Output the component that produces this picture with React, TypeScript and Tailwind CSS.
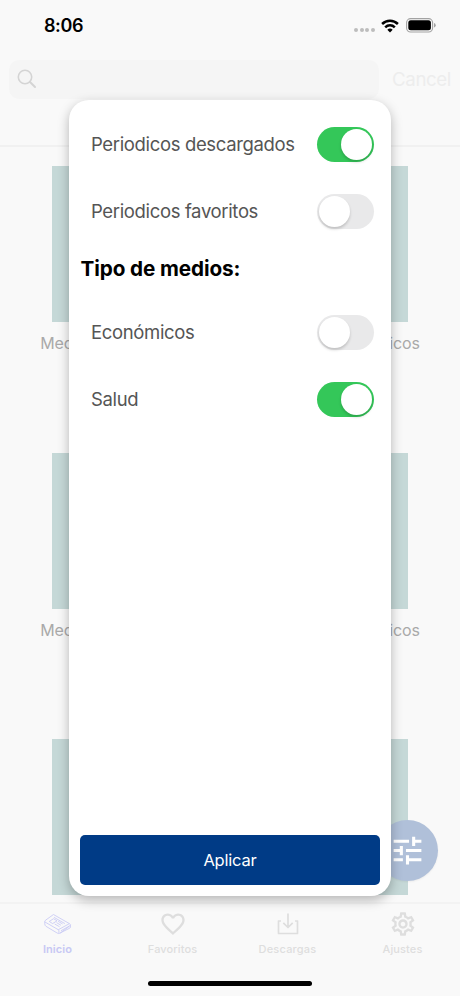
import { MdFavoriteBorder, MdOutlineSettings, MdTune } from "react-icons/md"

const filters = [
  { label: "Periodicos descargados", on: true },
  { label: "Periodicos favoritos", on: false },
]

const mediaTypes = [
  { label: "Económicos", on: false },
  { label: "Salud", on: true },
]

const rows = [0, 1, 2]

function NewspaperIcon() {
  return (
    <svg width="28" height="23" viewBox="0 0 30 24" fill="none" stroke="currentColor" strokeWidth="0.9" strokeLinejoin="round" strokeLinecap="round">
      <path d="M10.5 1.5 L27.5 11.2 Q29.3 12.3 27.7 13.5 L17.6 21 Q16 22.2 14.2 21.2 L2.2 14 Q.8 13 .8 11.2 V8.8 Q.8 8 1.8 7.3 Z" />
      <path d="M1 9.3 L15 17.4 Q16.6 18.3 16 20.5 M15.5 17.5 L26.8 11.3 M17.5 21 L27.8 15.8 Q29 15 28.3 13 M18.5 18.5 L26.5 14" />
      <path d="M11 4.5 L22 10.8 M6 8.5 L10.2 5.8 L14 8 L9.6 10.8 Z M15.5 8.8 L19.5 11.2 M13.8 10.2 L17.8 12.6 M11.8 11.7 L16.3 14.2" />
    </svg>
  )
}

function DownloadIcon() {
  return (
    <svg width="24" height="24" viewBox="0 0 24 24" fill="none" stroke="currentColor" strokeWidth="1.7" strokeLinejoin="round">
      <path d="M5 9 H2.5 V21.5 H21.5 V9 H19 M12 1.5 V15 M7.3 10.8 L12 15.5 L16.7 10.8" />
    </svg>
  )
}

function Switch({ on }: { on: boolean }) {
  return (
    <div className={`flex h-[35px] w-[57px] items-center rounded-full px-[2px] ${on ? "justify-end bg-[#34c759]" : "justify-start bg-[#e9e9ea]"}`}>
      <div className="size-[31px] rounded-full bg-white shadow-[0_2px_3px_rgba(0,0,0,0.18)]" />
    </div>
  )
}

function FilterRow({ label, on }: { label: string; on: boolean }) {
  return (
    <div className="flex h-[67px] items-center justify-between pr-[17.4px] pl-[22px]">
      <span className="pt-px text-[18.5px] tracking-[-0.35px] text-[#555555]">{label}</span>
      <Switch on={on} />
    </div>
  )
}

export default function App() {
  return (
    <div className="relative flex h-[996px] w-[460px] flex-col overflow-hidden bg-[#f9f9f9] font-['Inter','Liberation_Sans',sans-serif]">
      {/* Status bar */}
      <div className="flex h-[59px] shrink-0 items-center justify-between pr-[24px] pb-[8px] pl-[44px]">
        <span className="text-[18px] font-semibold tracking-[-0.4px] text-black">8:06</span>
        <div className="flex items-center">
          <div className="mt-[9px] flex gap-[1.6px] pr-[6px]">
            {[0, 1, 2, 3].map((dot) => (
              <div key={dot} className="size-[4px] rounded-full bg-[#bdbdbd]" />
            ))}
          </div>
          <svg width="18" height="14" viewBox="0 0 18 14" fill="none" stroke="black" strokeWidth="2.5">
            <path d="M1.1 5 A11.2 11.2 0 0 1 16.9 5" />
            <path d="M4.2 8.3 A6.8 6.8 0 0 1 13.8 8.3" />
            <path d="M9 13.5 L6.3 10.8 A3.9 3.9 0 0 1 11.7 10.8 Z" fill="black" stroke="none" />
          </svg>
          <svg className="ml-[7px]" width="30" height="15" viewBox="0 0 30 15">
            <rect x=".6" y=".6" width="26" height="13.4" rx="4" fill="none" stroke="#a3a3a3" strokeWidth="1.1" />
            <rect x="2.3" y="2.3" width="22.6" height="10" rx="2.5" fill="black" />
            <path d="M28 5 Q29.7 5.6 29.7 7.3 T28 9.6 Z" fill="#a3a3a3" />
          </svg>
        </div>
      </div>

      {/* Search */}
      <div className="flex h-[88px] shrink-0 items-start border-b-2 border-[#f1f1f1] pr-[9px] pl-[9px]">
        <div className="mt-px flex h-[39px] w-[370px] items-center rounded-[10px] bg-[#f5f5f5] pl-[8px]">
          <svg className="-mt-[2px]" width="20" height="20" viewBox="0 0 20 20" fill="none" stroke="#d4d4d4" strokeWidth="1.6" strokeLinecap="round">
            <circle cx="8" cy="8" r="6.7" />
            <path d="M13 13 L18 18" strokeWidth="2" />
          </svg>
        </div>
        <span className="mt-[7px] ml-auto text-[18.7px] leading-[28px] tracking-[-0.4px] text-[#ededed]">Cancel</span>
      </div>

      {/* Newspapers */}
      <div className="flex h-[755px] shrink-0 flex-col overflow-hidden pt-[19px]">
        {rows.map((row) => (
          <div key={row} className="grid h-[286.5px] shrink-0 grid-cols-2">
            {["left", "right"].map((side) => (
              <div key={side} className="flex flex-col items-center">
                <div className="h-[156px] w-[126px] bg-[#c5d8d7]" />
                {row < 2 && (
                  <span className="mt-[9px] text-[16px] leading-[24px] tracking-[-0.15px] whitespace-nowrap text-[#a9a9a9]">Medios económicos</span>
                )}
              </div>
            ))}
          </div>
        ))}
      </div>

      {/* Tab bar */}
      <nav className="grid h-[94px] shrink-0 grid-cols-4 border-t-2 border-[#f3f3f3] bg-[#f9f9f9] text-[11px] font-medium tracking-[0.1px] text-[#dedede]">
        <div className="flex flex-col items-center pt-[9px] font-semibold text-[#c7c8f4]">
          <NewspaperIcon />
          <span className="mt-[5px] leading-[16px]">Inicio</span>
        </div>
        <div className="flex flex-col items-center pt-[6px]">
          <MdFavoriteBorder size={28} />
          <span className="mt-[3px] leading-[16px]">Favoritos</span>
        </div>
        <div className="flex flex-col items-center pt-[8px]">
          <DownloadIcon />
          <span className="mt-[5px] leading-[16px] tracking-[0.2px]">Descargas</span>
        </div>
        <div className="flex flex-col items-center pt-[6px]">
          <MdOutlineSettings size={28} />
          <span className="mt-[3px] leading-[16px]">Ajustes</span>
        </div>
      </nav>

      <button className="absolute top-[820px] left-[376.5px] flex size-[61px] items-center justify-center rounded-full bg-[#b0c0d9] text-white shadow-[0_1px_2px_rgba(0,0,0,0.06)]">
        <MdTune size={37} />
      </button>

      <div className="absolute bottom-[10px] left-[148px] h-[5px] w-[164px] rounded-full bg-black" />

      {/* Filter dialog */}
      <div className="absolute top-[100px] left-[69px] flex h-[796px] w-[322px] flex-col rounded-[20px] bg-white pt-[11px] shadow-[0_4px_12px_rgba(0,0,0,0.28)]">
        {filters.map((item) => (
          <FilterRow key={item.label} label={item.label} on={item.on} />
        ))}
        <h2 className="flex h-[54px] items-center pb-[6px] pl-[11.5px] text-[20.7px] font-bold tracking-[-0.1px] text-black">Tipo de medios:</h2>
        {mediaTypes.map((item) => (
          <FilterRow key={item.label} label={item.label} on={item.on} />
        ))}
        <button className="mx-[11px] mt-auto mb-[11px] h-[50px] rounded-[5px] bg-[#003b86] text-[16.5px] tracking-[-0.2px] text-white">Aplicar</button>
      </div>
    </div>
  )
}
